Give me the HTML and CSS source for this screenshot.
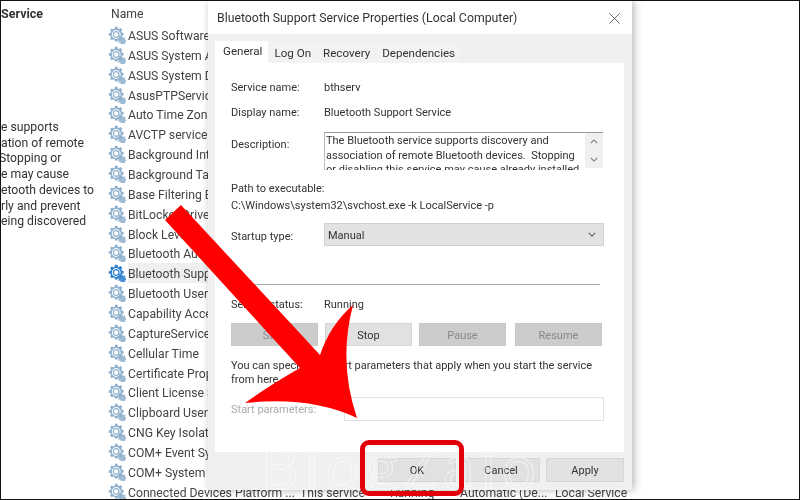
FILE: index.html
```html
<!DOCTYPE html>
<html lang="en">
<head>
<meta charset="utf-8">
<title>Bluetooth Support Service Properties</title>
<link rel="stylesheet" href="styles.css">
</head>
<body>
<svg class="defs" width="0" height="0" aria-hidden="true">
  <defs>
    <symbol id="gear" viewBox="0 0 18 18">
      <path d="M7 .8h2.4l.3 1.7 1.4.6 1.5-1 1.7 1.7-1 1.5.6 1.4 1.7.3v2.4l-1.7.3-.6 1.4 1 1.5-1.7 1.7-1.5-1-1.4.6-.3 1.7H7l-.3-1.7-1.4-.6-1.5 1-1.7-1.7 1-1.5-.6-1.4L.8 9.7V7.3l1.7-.3.6-1.4-1-1.5 1.7-1.7 1.5 1 1.4-.6z" fill="currentColor"/>
      <circle cx="8.2" cy="8.5" r="4.4" fill="#fff"/>
      <circle cx="8.2" cy="8.5" r="2.8" fill="none" stroke="currentColor" stroke-width="1.2"/>
      <path d="M12.5 10.5h2l.2 1 .9.4.9-.6 1 1-.5.9.3.9.7.2v2h-.8l-.3.8.5.9H12.6l-.1-1-.8-.4-.9.5-.7-1 .6-.9-.3-.8-1-.2v-1.8l1-.2.3-.8-.4-.9 1.2-.8.8.5z" fill="currentColor" opacity=".85"/>
    </symbol>
  </defs>
</svg>
<div class="screen">
  <aside class="side">
    <h2 class="side-title">Service</h2>
    <div class="side-text">
      <div>e supports</div>
      <div>ation of remote</div>
      <div class="cut">Stopping or</div>
      <div>e may cause</div>
      <div>etooth devices to</div>
      <div>rly and prevent</div>
      <div>eing discovered</div>
    </div>
  </aside>
  <main class="list">
    <div class="list-head">Name</div>
    <div class="row"><svg class="ico"><use href="#gear"/></svg><span>ASUS Software</span></div>
    <div class="row"><svg class="ico"><use href="#gear"/></svg><span>ASUS System Analysis</span></div>
    <div class="row"><svg class="ico"><use href="#gear"/></svg><span>ASUS System Diagnosis</span></div>
    <div class="row"><svg class="ico"><use href="#gear"/></svg><span>AsusPTPService</span></div>
    <div class="row"><svg class="ico"><use href="#gear"/></svg><span>Auto Time Zone Updater</span></div>
    <div class="row"><svg class="ico"><use href="#gear"/></svg><span>AVCTP service</span></div>
    <div class="row"><svg class="ico"><use href="#gear"/></svg><span>Background Intelligent</span></div>
    <div class="row"><svg class="ico"><use href="#gear"/></svg><span>Background Tasks</span></div>
    <div class="row"><svg class="ico"><use href="#gear"/></svg><span>Base Filtering Engine</span></div>
    <div class="row"><svg class="ico"><use href="#gear"/></svg><span>BitLocker Drive</span></div>
    <div class="row"><svg class="ico"><use href="#gear"/></svg><span>Block Level</span></div>
    <div class="row"><svg class="ico"><use href="#gear"/></svg><span>Bluetooth Audio</span></div>
    <div class="row selected"><svg class="ico"><use href="#gear"/></svg><span class="sel-text">Bluetooth Support</span></div>
    <div class="row"><svg class="ico"><use href="#gear"/></svg><span>Bluetooth User</span></div>
    <div class="row"><svg class="ico"><use href="#gear"/></svg><span>Capability Access</span></div>
    <div class="row"><svg class="ico"><use href="#gear"/></svg><span>CaptureService</span></div>
    <div class="row"><svg class="ico"><use href="#gear"/></svg><span>Cellular Time</span></div>
    <div class="row"><svg class="ico"><use href="#gear"/></svg><span>Certificate Propagation</span></div>
    <div class="row"><svg class="ico"><use href="#gear"/></svg><span>Client License Service</span></div>
    <div class="row"><svg class="ico"><use href="#gear"/></svg><span>Clipboard User</span></div>
    <div class="row"><svg class="ico"><use href="#gear"/></svg><span>CNG Key Isolation</span></div>
    <div class="row"><svg class="ico"><use href="#gear"/></svg><span>COM+ Event System</span></div>
    <div class="row"><svg class="ico"><use href="#gear"/></svg><span>COM+ System</span></div>
    <div class="row last">
      <svg class="ico"><use href="#gear"/></svg>
      <span class="c-name">Connected Devices Platform ...</span>
      <span class="c-desc">This service</span>
      <span class="c-stat">Running</span>
      <span class="c-start">Automatic (De...</span>
      <span class="c-log">Local Service</span>
    </div>
  </main>

  <section class="dialog">
    <header class="titlebar">
      <span class="title">Bluetooth Support Service Properties (Local Computer)</span>
      <svg class="close" viewBox="0 0 12 12"><path d="M.5.5l11 11M11.5.5l-11 11" stroke="#444" stroke-width=".9" fill="none"/></svg>
    </header>
    <nav class="tabs">
      <span class="tab active">General</span>
      <span class="tab">Log On</span>
      <span class="tab">Recovery</span>
      <span class="tab">Dependencies</span>
    </nav>
    <div class="panel">
      <div class="field f-name"><span class="lab">Service name:</span><span>bthserv</span></div>
      <div class="field f-disp"><span class="lab">Display name:</span><span>Bluetooth Support Service</span></div>
      <div class="field f-desc">
        <span class="lab">Description:</span>
        <div class="descbox">
          <div class="desctext">The Bluetooth service supports discovery and<br>association of remote Bluetooth devices.&nbsp; Stopping<br>or disabling this service may cause already installed</div>
          <div class="scroll">
            <svg viewBox="0 0 10 6"><path d="M1 5l4-4 4 4" fill="none" stroke="#777" stroke-width="1.3"/></svg>
            <svg viewBox="0 0 10 6"><path d="M1 1l4 4 4-4" fill="none" stroke="#777" stroke-width="1.3"/></svg>
          </div>
        </div>
      </div>
      <div class="path-lab">Path to executable:</div>
      <div class="path-val">C:\Windows\system32\svchost.exe -k LocalService -p</div>
      <div class="field f-start">
        <span class="lab">Startup type:</span>
        <div class="select"><span>Manual</span>
          <svg viewBox="0 0 10 6"><path d="M1 1l4 4 4-4" fill="none" stroke="#666" stroke-width="1.4"/></svg>
        </div>
      </div>
      <div class="sep"></div>
      <div class="field f-status"><span class="lab">Service status:</span><span>Running</span></div>
      <div class="svc-btns">
        <span class="btn off">Start</span>
        <span class="btn">Stop</span>
        <span class="btn off">Pause</span>
        <span class="btn off">Resume</span>
      </div>
      <p class="hint">You can specify the start parameters that apply when you start the service<br>from here.</p>
      <div class="field f-param"><span class="lab dim">Start parameters:</span><div class="input"></div></div>
    </div>
    <footer class="foot">
      <span class="btn fbtn">OK</span>
      <span class="btn fbtn">Cancel</span>
      <span class="btn fbtn">Apply</span>
    </footer>
  </section>

  <div class="watermark">BlogZalo</div>
  <svg class="arrow" viewBox="0 0 800 500" aria-hidden="true">
    <path d="M181 205L165 220L300 368Q270 385 245 403Q310 396 357 418Q338 362 353 305Q330 325 320 355Z" fill="#f00"/>
  </svg>
  <div class="ring"></div>
</div>
</body>
</html>
```
FILE: styles.css
```css
* { box-sizing: border-box; }
html, body { margin: 0; padding: 0; background: #fff; }
.defs { position: absolute; }
.screen {
  position: relative;
  display: flex;
  width: 800px;
  height: 500px;
  overflow: hidden;
  border: 1px solid #111;
  background: #fff;
  color: #333;
  font-family: Roboto, "Open Sans", sans-serif;
  font-size: 12.2px;
  filter: blur(.35px);
}
.side { width: 107px; flex: none; padding-top: 3px; overflow: hidden; }
.side-title { margin: 0; font-size: 12.5px; line-height: 20px; font-weight: 700; color: #333; }
.side-text { margin-top: 96px; line-height: 15.7px; white-space: nowrap; }
.cut { margin-left: -2px; }
.list { flex: 1; min-width: 0; }
.list-head { height: 24px; padding: 3px 0 0 3px; line-height: 20px; color: #444; }
.row {
  display: flex;
  align-items: center;
  height: 19.87px;
  width: 100px;
  white-space: nowrap;
  color: #444;
}
.row span { padding-top: 2px; }
.ico { width: 18px; height: 18px; flex: none; margin-right: 2px; color: #8fb0cc; }
.sel-text { flex: 1; height: 100%; display: flex; align-items: center; background: #efefef; }
.selected .ico { color: #2a7fd0; }
.last { width: auto; }
.c-name { width: 172px; flex: none; overflow: hidden; }
.c-desc { width: 90px; flex: none; }
.c-stat { width: 70px; flex: none; }
.c-start { width: 95px; flex: none; }
.dialog {
  position: absolute;
  left: 207px;
  top: 0;
  width: 424px;
  height: 489px;
  display: flex;
  flex-direction: column;
  background: #f0f0f0;
  box-shadow: 2px 0 8px rgba(0,0,0,.3);
  color: #333;
  font-size: 11px;
}
.titlebar {
  height: 33px;
  flex: none;
  display: flex;
  align-items: center;
  justify-content: space-between;
  padding: 1px 12px 0 9px;
  background: #fff;
}
.title { font-size: 12.3px; white-space: nowrap; }
.close { width: 11px; height: 11px; }
.tabs { display: flex; height: 29px; flex: none; padding: 9px 0 0 7px; background: #f0f0f0; align-items: stretch; font-size: 11.6px; }
.tab { display: flex; align-items: center; padding: 0 6px; background: #f2f2f2; }
.tab.active { background: #fff; margin-top: -2px; padding: 0 6px 2px 8px; }
.panel {
  flex: none;
  height: 389px;
  margin: 0 8px 0 7px;
  padding: 0 16px;
  background: #fff;
}
.field { display: flex; align-items: center; }
.lab { width: 93px; flex: none; }
.f-name { height: 16px; margin-top: 16px; }
.f-disp { height: 16px; margin-top: 9px; }
.f-desc { margin-top: 12px; height: 38px; align-items: flex-start; }
.f-desc .lab { margin-top: 6px; }
.descbox {
  width: 279px;
  height: 38px;
  display: flex;
  overflow: hidden;
  border-top: 1px solid #999;
  border-left: 1px solid #bbb;
}
.desctext { flex: 1; line-height: 14.5px; padding: 1px 0 0 1px; white-space: nowrap; overflow: hidden; }
.scroll { width: 18px; height: 35px; flex: none; display: flex; flex-direction: column; justify-content: space-around; align-items: center; background: #f0f0f0; }
.scroll svg { width: 8px; height: 5px; }
.path-lab { margin-top: 11px; line-height: 15px; }
.path-val { margin-top: 2px; line-height: 15px; white-space: nowrap; }
.f-start { margin-top: 10px; }
.f-start .lab { padding-top: 3px; }
.select {
  position: relative;
  width: 280px;
  height: 23px;
  display: flex;
  align-items: center;
  justify-content: space-between;
  padding: 0 7px 0 3px;
  background: #e2e2e2;
  border: 1px solid #d0d0d0;
}
.select span { padding-top: 2px; }
.select svg { width: 8px; height: 5px; }
.sep { height: 1px; width: 369px; margin-top: 38px; background: #aaa; }
.f-status { margin-top: 11px; height: 16px; }
.svc-btns { display: flex; gap: 7px; margin-top: 11px; }
.svc-btns .btn:last-child { margin-left: 2px; }
.btn {
  display: flex;
  align-items: center;
  justify-content: center;
  width: 87px;
  height: 23px;
  padding-top: 1px;
  background: #e1e1e1;
  border: 1px solid #d6d6d6;
  color: #333;
}
.btn.off { background: #ccc; border-color: #c8c8c8; color: #888; }
.hint { margin: 13px 0 0; line-height: 14px; white-space: nowrap; }
.f-param { margin-top: 10px; }
.dim { color: #aaa; width: 113px; }
.input { width: 260px; height: 24px; border: 1px solid #e2e2e2; background: #fff; }
.foot { display: flex; justify-content: flex-end; gap: 6px; padding: 6px 8px 0 0; }
.fbtn { width: 78px; height: 24px; }
.watermark {
  position: absolute;
  left: 260px;
  top: 438px;
  font-size: 58px;
  line-height: 56px;
  color: transparent;
  -webkit-text-stroke: 1px rgba(255,255,255,.55);
  letter-spacing: 6px;
  white-space: nowrap;
  font-family: "Open Sans", sans-serif;
}
.arrow { position: absolute; left: -1px; top: -1px; width: 800px; height: 500px; pointer-events: none; }
.ring {
  position: absolute;
  left: 359px;
  top: 439px;
  width: 104px;
  height: 56px;
  border: 5px solid #e4000a;
  border-radius: 9px;
}
```
